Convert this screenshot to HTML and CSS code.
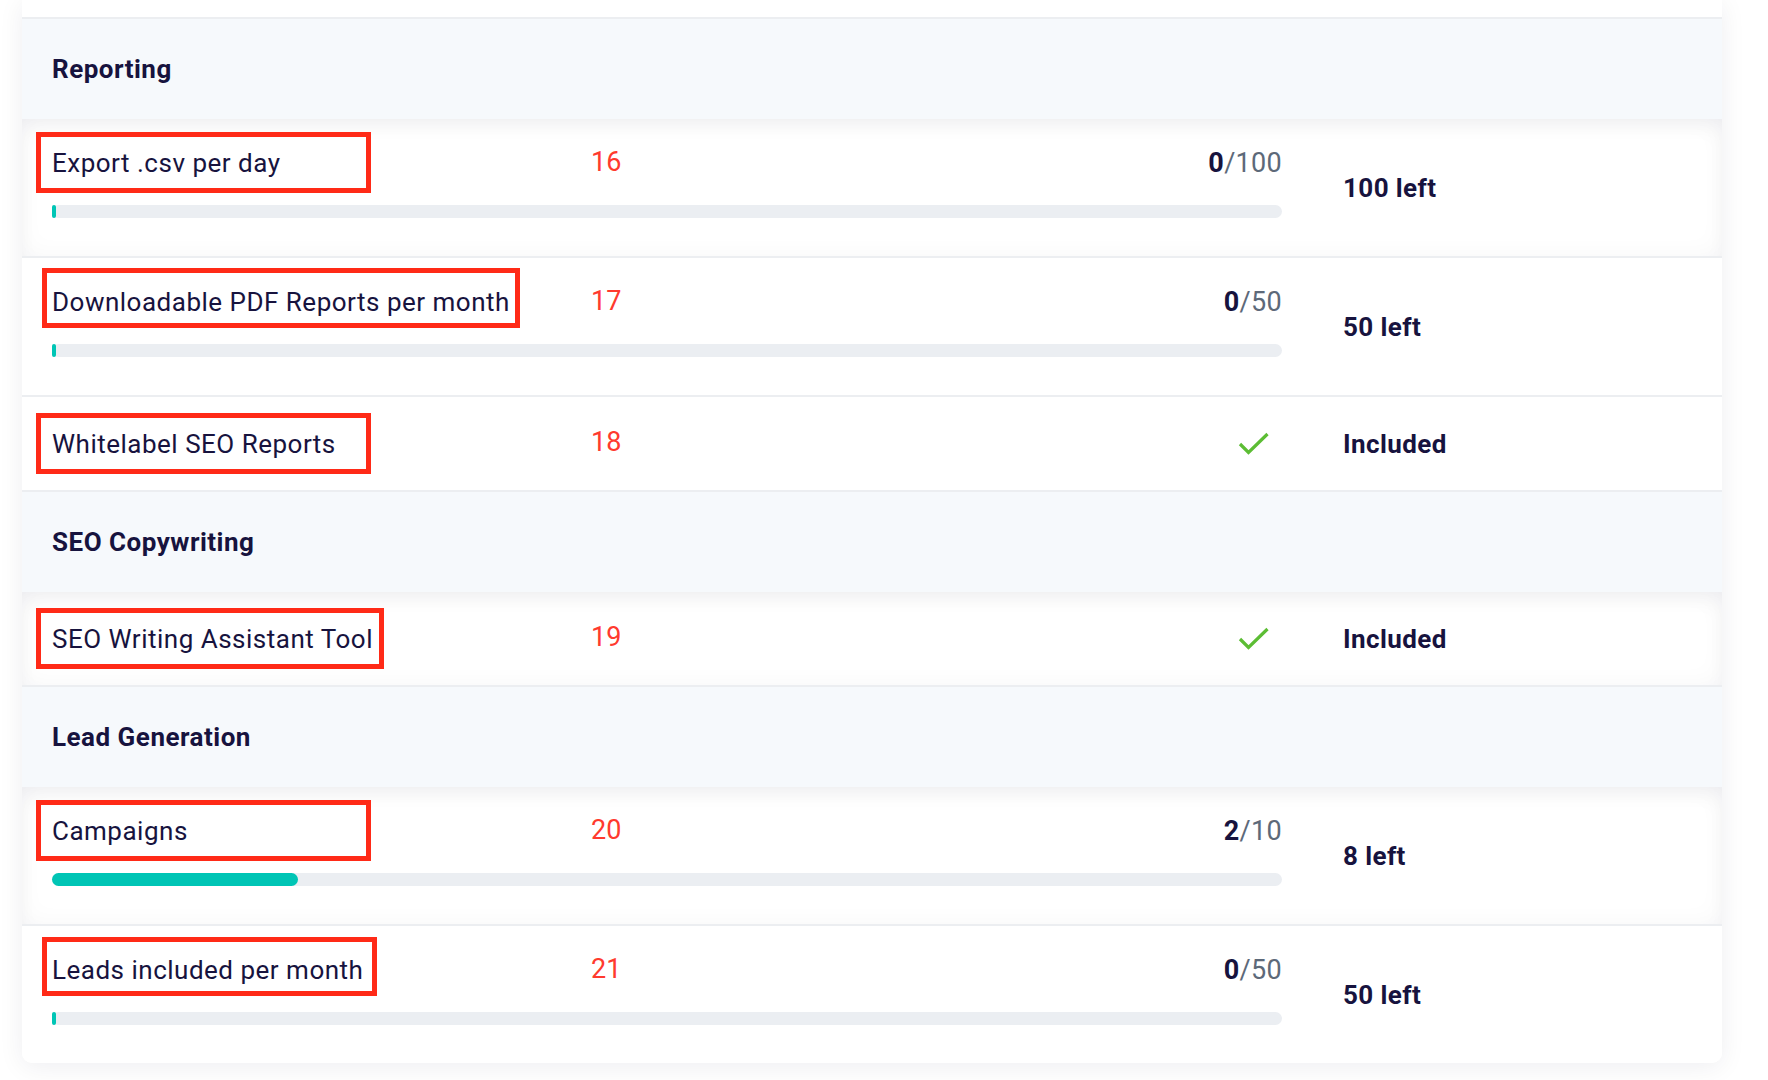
FILE: index.html
```html
<!DOCTYPE html>
<html lang="en">
<head>
<meta charset="utf-8">
<title>Limits</title>
<link rel="stylesheet" href="styles.css">
</head>
<body>
<div class="card">
  <div class="row row-cut"></div>

  <div class="section-head">Reporting</div>

  <div class="row row-progress row-first">
    <div class="main">
      <div class="line">
        <span class="label mark">Export .csv per day</span>
        <span class="idx">16</span>
        <span class="usage"><b>0</b>/100</span>
      </div>
      <div class="bar"><div class="fill" style="width:0%"></div></div>
    </div>
    <div class="side">100 left</div>
  </div>

  <div class="row row-progress">
    <div class="main">
      <div class="line">
        <span class="label mark mark-wide">Downloadable PDF Reports per month</span>
        <span class="idx">17</span>
        <span class="usage"><b>0</b>/50</span>
      </div>
      <div class="bar"><div class="fill" style="width:0%"></div></div>
    </div>
    <div class="side">50 left</div>
  </div>

  <div class="row row-simple">
    <div class="main">
      <div class="line">
        <span class="label mark">Whitelabel SEO Reports</span>
        <span class="idx">18</span>
        <span class="check"><svg width="32" height="24" viewBox="0 0 32 24"><polyline points="2,12 10.5,20.5 29.5,2" fill="none" stroke="#5cbd34" stroke-width="3.2"/></svg></span>
      </div>
    </div>
    <div class="side">Included</div>
  </div>

  <div class="section-head">SEO Copywriting</div>

  <div class="row row-simple row-first">
    <div class="main">
      <div class="line">
        <span class="label mark mark-seo">SEO Writing Assistant Tool</span>
        <span class="idx">19</span>
        <span class="check"><svg width="32" height="24" viewBox="0 0 32 24"><polyline points="2,12 10.5,20.5 29.5,2" fill="none" stroke="#5cbd34" stroke-width="3.2"/></svg></span>
      </div>
    </div>
    <div class="side">Included</div>
  </div>

  <div class="section-head">Lead Generation</div>

  <div class="row row-progress row-first">
    <div class="main">
      <div class="line">
        <span class="label mark">Campaigns</span>
        <span class="idx">20</span>
        <span class="usage"><b>2</b>/10</span>
      </div>
      <div class="bar"><div class="fill" style="width:20%"></div></div>
    </div>
    <div class="side">8 left</div>
  </div>

  <div class="row row-progress row-last">
    <div class="main">
      <div class="line">
        <span class="label mark mark-leads">Leads included per month</span>
        <span class="idx">21</span>
        <span class="usage"><b>0</b>/50</span>
      </div>
      <div class="bar"><div class="fill" style="width:0%"></div></div>
    </div>
    <div class="side">50 left</div>
  </div>
</div>
</body>
</html>
```

FILE: styles.css
```css
*, *::before, *::after { box-sizing: border-box; }

html, body {
  margin: 0;
  padding: 0;
  background: #ffffff;
}

body {
  font-family: Roboto, "Liberation Sans", Arial, sans-serif;
  color: #17133e;
  height: 1080px;
  overflow: hidden;
}

.card {
  margin-left: 22px;
  width: 1700px;
  background: #ffffff;
  border-radius: 0 0 10px 10px;
  box-shadow: 0 4px 26px rgba(20, 20, 50, 0.07);
}

.row {
  display: grid;
  grid-template-columns: 1230px 1fr;
  column-gap: 61px;
  align-items: center;
  padding: 0 0 0 30px;
  border-bottom: 2px solid #eceef1;
  background: #ffffff;
}

.row-cut {
  height: 19px;
  display: block;
}

.row-last {
  border-bottom: none;
  border-radius: 0 0 10px 10px;
}

.row-first {
  box-shadow: inset 0 10px 22px -6px rgba(20, 20, 50, 0.06),
              inset 0 0 26px rgba(20, 20, 50, 0.035);
}

.row-progress {
  height: 139px;
}
.row-progress.row-last {
  height: 137px;
}
.row-progress .main {
  padding-top: 26px;
  padding-bottom: 38px;
  align-self: start;
}

.row-simple {
  height: 95px;
}

.section-head {
  height: 100px;
  display: flex;
  align-items: center;
  padding-left: 30px;
  background: #f6f9fc;
  font-size: 26px;
  font-weight: 700;
  letter-spacing: 0.5px;
}

.line {
  display: grid;
  grid-template-columns: 539px auto 1fr auto;
  align-items: center;
  height: 36px;
}

.label {
  grid-column: 1;
  font-size: 26px;
  line-height: 36px;
  letter-spacing: 0.5px;
  white-space: nowrap;
  justify-self: start;
}

.mark {
  position: relative;
}
.mark::after {
  content: "";
  position: absolute;
  left: -16px;
  top: -13px;
  width: 335px;
  height: 61px;
  border: 5px solid #ff2a17;
}
.mark-wide::after {
  left: -10px;
  top: -16px;
  width: 478px;
  height: 60px;
}
.mark-seo::after {
  width: 348px;
}
.mark-leads::after {
  left: -10px;
  top: -15px;
  width: 335px;
  height: 59px;
}

.idx {
  grid-column: 2;
  font-size: 27px;
  color: #ff3a2e;
  margin-top: -3px;
}

.usage {
  grid-column: 4;
  font-size: 27px;
  color: #5d6979;
  letter-spacing: 0.3px;
}
.usage b {
  color: #17133e;
  font-weight: 700;
}

.check {
  grid-column: 4;
  display: flex;
  margin-right: 12px;
}

.bar {
  margin-top: 24px;
  height: 13px;
  border-radius: 7px;
  background: #ebeef2;
}
.fill {
  height: 100%;
  min-width: 4px;
  border-radius: 7px;
  background: #00c5b5;
}

.side {
  font-size: 26px;
  font-weight: 700;
  letter-spacing: 0.4px;
}
```
